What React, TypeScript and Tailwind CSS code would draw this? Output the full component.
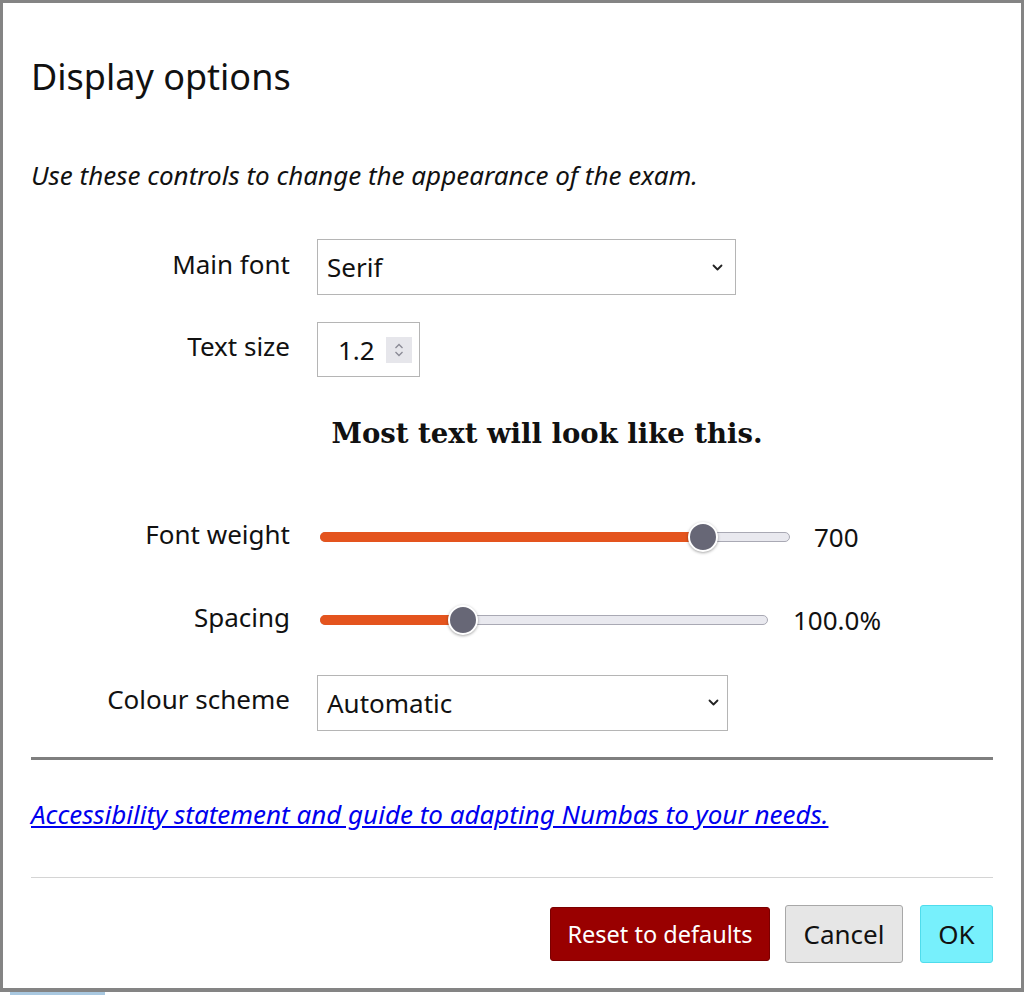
import React from "react";

const Chevron = () => (
  <svg width="13" height="9" viewBox="0 0 13 9" className="shrink-0">
    <path d="M2.5 2.5 L6.5 6.5 L10.5 2.5" fill="none" stroke="#222" strokeWidth="1.8" strokeLinecap="round" strokeLinejoin="round" />
  </svg>
);

const Slider = ({ width, pct }: { width: number; pct: number }) => {
  const fill = Math.round(width * pct);
  return (
    <div className="relative h-[28px]" style={{ width }}>
      <div className="absolute left-0 right-0 top-[9px] h-[10px] rounded-full bg-[#e9e9ef] border border-[#a9a9b4]" />
      <div className="absolute left-0 top-[9px] h-[10px] rounded-full bg-[#e4541e]" style={{ width: fill }} />
      <div
        className="absolute -top-[1px] h-[30px] w-[30px] rounded-full bg-[#676776] border-[2.5px] border-white shadow-[0_1px_3px_rgba(0,0,0,0.35)]"
        style={{ left: fill - 15 }}
      />
    </div>
  );
};

export default function App() {
  return (
    <div className="w-[1024px] h-[995px] bg-white relative" style={{ fontFamily: '"Noto Sans", sans-serif' }}>
      <div className="w-[1024px] h-[992px] border-[3px] border-b-[4px] border-[#848484] bg-white text-[#111] pl-[28px] pr-[28px]">
        <h1 className="text-[36px] leading-none pt-[56px] font-normal">Display options</h1>
        <p className="italic text-[26px] mt-[67px] leading-none">Use these controls to change the appearance of the exam.</p>

        <div className="mt-[51px] grid grid-cols-[259px_1fr] gap-x-[27px] text-[26px] leading-none">
          <div className="h-[56px] flex items-center justify-end pb-[6px]">Main font</div>
          <div>
            <div className="w-[419px] h-[56px] border border-[#b5b5b5] flex items-center justify-between pl-[9px] pr-[11px]">
              <span>Serif</span>
              <Chevron />
            </div>
          </div>

          <div className="h-[55px] mt-[27px] flex items-center justify-end pb-[7px]">Text size</div>
          <div className="mt-[27px]">
            <div className="w-[103px] h-[55px] border border-[#b5b5b5] flex items-center pl-[20px]">
              <span>1.2</span>
              <div className="ml-[11px] w-[26px] h-[26px] bg-[#e6e6eb] flex flex-col items-center justify-center gap-[2px]">
                <svg width="10" height="6" viewBox="0 0 10 6"><path d="M1.5 5 L5 1.5 L8.5 5" fill="none" stroke="#8a8a95" strokeWidth="1.3" /></svg>
                <svg width="10" height="6" viewBox="0 0 10 6"><path d="M1.5 1 L5 4.5 L8.5 1" fill="none" stroke="#8a8a95" strokeWidth="1.3" /></svg>
              </div>
            </div>
          </div>
        </div>

        <div
          className="mt-[43px] text-center font-bold text-[27.5px] leading-none pl-[70px]"
          style={{ fontFamily: '"DejaVu Serif", serif' }}
        >
          Most text will look like this.
        </div>

        <div className="mt-[75px] grid grid-cols-[259px_auto_1fr] gap-x-[27px] text-[26px] leading-none items-center">
          <div className="text-right -mt-[6px]">Font weight</div>
          <div className="pl-[3px]"><Slider width={470} pct={0.815} /></div>
          <div className="-ml-[3px]">700</div>
        </div>

        <div className="mt-[55px] grid grid-cols-[259px_auto_1fr] gap-x-[27px] text-[26px] leading-none items-center">
          <div className="text-right -mt-[6px]">Spacing</div>
          <div className="pl-[3px]"><Slider width={448} pct={0.32} /></div>
          <div className="-ml-[2px]">100.0%</div>
        </div>

        <div className="mt-[41px] grid grid-cols-[259px_1fr] gap-x-[27px] text-[26px] leading-none">
          <div className="h-[56px] flex items-center justify-end pb-[8px]">Colour scheme</div>
          <div>
            <div className="w-[411px] h-[56px] border border-[#b5b5b5] flex items-center justify-between pl-[9px] pr-[7px]">
              <span>Automatic</span>
              <Chevron />
            </div>
          </div>
        </div>

        <div className="mt-[26px] h-[3px] bg-[#7f7f7f]" />

        <div className="mt-[41px] text-[26px] leading-none">
          <a href="#" className="italic underline text-[#0000ee]">
            Accessibility statement and guide to adapting Numbas to your needs.
          </a>
        </div>

        <div className="mt-[50px] h-px bg-[#d4d4d4]" />

        <div className="mt-[27px] flex justify-end items-center text-[26px] leading-none">
          <button className="h-[54px] w-[220px] pt-[3px] rounded-[3px] bg-[#990000] text-white border border-[#7a0000] text-[23.5px]">Reset to defaults</button>
          <button className="h-[58px] w-[118px] ml-[15px] rounded-[3px] bg-[#e6e6e6] text-[#111] border border-[#a8a8a8]">Cancel</button>
          <button className="h-[58px] w-[73px] ml-[17px] rounded-[3px] bg-[#77f0fc] text-[#111] border border-[#4fdcec]">OK</button>
        </div>
      </div>
      <div className="absolute left-[10px] top-[992px] w-[95px] h-[3px] bg-[#a9c8e0]" />
    </div>
  );
}
